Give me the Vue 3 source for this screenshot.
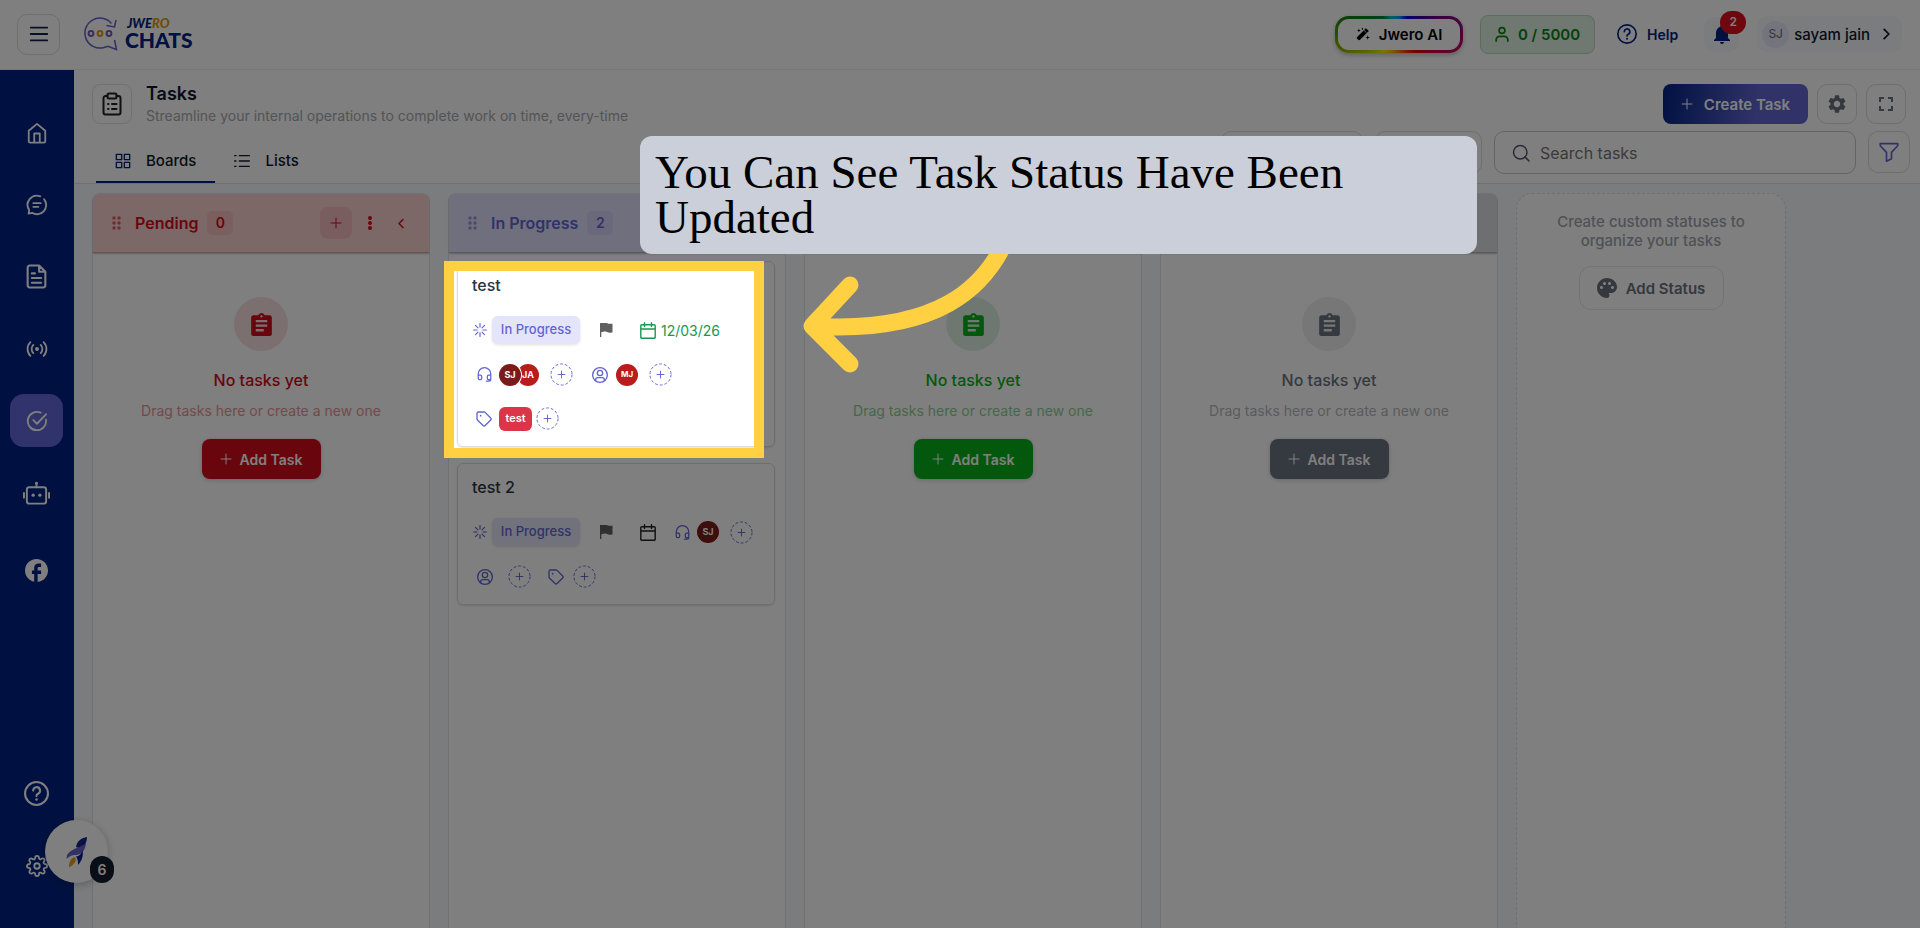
<template>
  <div class="app">
    <svg class="sprite" aria-hidden="true">
      <symbol id="i-menu" viewBox="0 0 24 24"><path d="M3 5h18M3 12h18M3 19h18" class="line" /></symbol>
      <symbol id="i-home" viewBox="0 0 24 24"><path d="M3 9.500 12 2l9 7.500V21a1.500 1.500 0 0 1-1.500 1.500h-15A1.500 1.500 0 0 1 3 21zM9 22v-9.500h6V22" class="line" /></symbol>
      <symbol id="i-chat" viewBox="0 0 24 24"><path d="M15.500 2.600A10 10 0 0 0 3.500 17.500L2.800 21.500l4-.9A10 10 0 0 0 19.800 5.800M8 10h8M8 14h5.500" class="line" /></symbol>
      <symbol id="i-doc" viewBox="0 0 24 24"><path d="M14.500 1.500h-9A2 2 0 0 0 3.500 3.500v17a2 2 0 0 0 2 2h13a2 2 0 0 0 2-2v-13zM14.500 1.500v6h6M7.500 9h3M7.500 13.500h9M7.500 18h9" class="line" /></symbol>
      <symbol id="i-live" viewBox="0 0 24 24"><circle cx="12" cy="12" r="2.200" fill="currentColor" /><path d="M8 7.500a6.400 6.400 0 0 0 0 9M16 7.500a6.400 6.400 0 0 1 0 9M4.800 4.500a10.600 10.600 0 0 0 0 15M19.200 4.500a10.600 10.600 0 0 1 0 15" class="line" /></symbol>
      <symbol id="i-check" viewBox="0 0 24 24"><path d="M21.800 10.500A10 10 0 1 1 16 2.900M8 11l4 4L22 4.500" class="line" /></symbol>
      <symbol id="i-bot" viewBox="0 0 28 24"><rect x="4" y="6" width="20" height="17" rx="2.500" class="line" /><path d="M14 6V1.500M1 12v5M27 12v5" class="line" /><circle cx="14" cy="1.800" r="1.500" fill="currentColor" /><circle cx="10.500" cy="14.300" r="1.700" fill="currentColor" /><circle cx="17.500" cy="14.300" r="1.700" fill="currentColor" /></symbol>
      <symbol id="i-facebook" viewBox="2 2 20 20"><path fill="currentColor" d="M22 12c0-5.520-4.480-10-10-10S2 6.480 2 12c0 4.840 3.440 8.870 8 9.800V15H8v-3h2V9.500C10 7.570 11.570 6 13.500 6H16v3h-2c-.55 0-1 .45-1 1v2h3v3h-3v6.950c5.050-.5 9-4.760 9-9.950" /></symbol>
      <symbol id="i-help" viewBox="0 0 24 24"><circle cx="12" cy="12" r="11" class="line" /><path d="M8.800 9.200a3.300 3.300 0 1 1 4.700 3c-1 .5-1.500 1.100-1.500 2.300" class="line" /><circle cx="12" cy="17.800" r="1.200" fill="currentColor" /></symbol>
      <symbol id="i-cog" viewBox="0 0 24 24"><circle cx="12" cy="12" r="3" class="line" /><path class="line" d="M19.400 15a1.650 1.650 0 0 0 .33 1.820l.06.06a2 2 0 0 1 0 2.830 2 2 0 0 1-2.830 0l-.06-.06a1.650 1.650 0 0 0-1.820-.33 1.650 1.650 0 0 0-1 1.510V21a2 2 0 0 1-2 2 2 2 0 0 1-2-2v-.09A1.650 1.650 0 0 0 9 19.400a1.650 1.650 0 0 0-1.820.33l-.06.06a2 2 0 0 1-2.830 0 2 2 0 0 1 0-2.830l.06-.06a1.650 1.650 0 0 0 .33-1.820 1.650 1.650 0 0 0-1.510-1H3a2 2 0 0 1-2-2 2 2 0 0 1 2-2h.09A1.650 1.650 0 0 0 4.600 9a1.650 1.650 0 0 0-.33-1.820l-.06-.06a2 2 0 0 1 0-2.830 2 2 0 0 1 2.830 0l.06.06a1.650 1.650 0 0 0 1.820.33H9a1.650 1.650 0 0 0 1-1.510V3a2 2 0 0 1 2-2 2 2 0 0 1 2 2v.09a1.650 1.650 0 0 0 1 1.510 1.650 1.650 0 0 0 1.820-.33l.06-.06a2 2 0 0 1 2.830 0 2 2 0 0 1 0 2.830l-.06.06a1.650 1.650 0 0 0-.33 1.820V9a1.650 1.650 0 0 0 1.510 1H21a2 2 0 0 1 2 2 2 2 0 0 1-2 2h-.09a1.650 1.650 0 0 0-1.510 1z" /></symbol>
      <symbol id="i-gear" viewBox="2 2 20 20"><path fill="currentColor" d="M19.140 12.940c.04-.3.06-.61.06-.94 0-.32-.02-.64-.07-.94l2.030-1.580c.18-.14.23-.41.12-.61l-1.920-3.320c-.12-.22-.37-.29-.59-.22l-2.390.96c-.5-.38-1.030-.7-1.620-.94l-.36-2.540c-.04-.24-.24-.41-.48-.41h-3.840c-.24 0-.43.17-.47.41l-.36 2.540c-.59.24-1.130.57-1.620.94l-2.390-.96c-.22-.08-.47 0-.59.22L2.740 8.870c-.12.21-.08.47.12.61l2.030 1.580c-.05.3-.09.63-.09.94s.02.64.07.94l-2.030 1.580c-.18.14-.23.41-.12.61l1.920 3.320c.12.22.37.29.59.22l2.390-.96c.5.38 1.030.7 1.620.94l.36 2.540c.05.24.24.41.48.41h3.840c.24 0 .44-.17.47-.41l.36-2.540c.59-.24 1.130-.56 1.620-.94l2.390.96c.22.08.47 0 .59-.22l1.920-3.320c.12-.22.07-.47-.12-.61zM12 15.600c-1.980 0-3.600-1.620-3.600-3.600s1.620-3.600 3.600-3.600 3.600 1.620 3.600 3.600-1.620 3.600-3.600 3.600" /></symbol>
      <symbol id="i-full" viewBox="5 5 14 14"><path fill="currentColor" d="M7 14H5v5h5v-2H7zm-2-4h2V7h3V5H5zm12 7h-3v2h5v-5h-2zM14 5v2h3v3h2V5z" /></symbol>
      <symbol id="i-clipboard" viewBox="0 0 24 24"><path d="M7.500 4h-2A2 2 0 0 0 3.500 6v14.500a2 2 0 0 0 2 2h13a2 2 0 0 0 2-2V6a2 2 0 0 0-2-2h-2M8 12h.5M8 17h.5M12 12h4.500M12 17h4.500" class="line" /><rect x="7.500" y="1.500" width="9" height="5" rx="1.500" class="line" /></symbol>
      <symbol id="i-boards" viewBox="0 0 24 24"><path d="M2 2h8v8H2zM14 2h8v8h-8zM2 14h8v8H2zM14 14h8v8h-8z" class="line" /></symbol>
      <symbol id="i-lists" viewBox="0 0 24 24"><path d="M8 4h15M8 12h15M8 20h15M1 4h2M1 12h2M1 20h2" class="line" /></symbol>
      <symbol id="i-plus" viewBox="0 0 24 24"><path d="M12 2v20M2 12h20" class="line" /></symbol>
      <symbol id="i-search" viewBox="0 0 24 24"><circle cx="11" cy="11" r="9" class="line" /><path d="m17.500 17.500 5 5" class="line" /></symbol>
      <symbol id="i-filter" viewBox="0 0 24 24"><path d="M1.500 2h21v2.500L15 12.500V20l-6 3V12.500L1.500 4.500z" class="line" /></symbol>
      <symbol id="i-wand" viewBox="0 0 24 24"><path fill="currentColor" d="m17 2 5 5L7 22a2 2 0 0 1-3 0l-2-2a2 2 0 0 1 0-3zM5 3l1 2 2 1-2 1-1 2-1-2-2-1 2-1zM11 1l.7 1.500 1.300.7-1.300.7L11 5.500l-.7-1.600L9 3.200l1.300-.7zM20 14l1 3 3 1-3 1-1 3-1-3-3-1 3-1z" /><path d="m14 6 4 4" stroke="#fff" stroke-width="1.500" /></symbol>
      <symbol id="i-person" viewBox="0 0 24 26"><circle cx="12" cy="7" r="5" class="line" /><path d="M2 25v-2a6 6 0 0 1 6-6h8a6 6 0 0 1 6 6v2" class="line" /></symbol>
      <symbol id="i-bell" viewBox="4 2 16 20"><path fill="currentColor" d="M12 22c1.100 0 2-.9 2-2h-4c0 1.100.89 2 2 2m6-6v-5c0-3.070-1.640-5.640-4.500-6.320V4c0-.83-.67-1.500-1.500-1.500s-1.500.67-1.500 1.500v.68C7.630 5.360 6 7.920 6 11v5l-2 2v1h16v-1z" /></symbol>
      <symbol id="i-right" viewBox="0 0 12 20"><path d="m2 2 8 8-8 8" class="line" /></symbol>
      <symbol id="i-left" viewBox="0 0 12 20"><path d="m10 2-8 8 8 8" class="line" /></symbol>
      <symbol id="i-dots" viewBox="0 0 4 14"><path fill="currentColor" d="M2 0a2 2 0 1 1 0 4 2 2 0 0 1 0-4m0 5a2 2 0 1 1 0 4 2 2 0 0 1 0-4m0 5a2 2 0 1 1 0 4 2 2 0 0 1 0-4" /></symbol>
      <symbol id="i-task" viewBox="3 1 18 20"><path fill="currentColor" d="M19 3h-4.180C14.400 1.840 13.300 1 12 1s-2.400.84-2.820 2H5c-1.100 0-2 .9-2 2v14c0 1.100.9 2 2 2h14c1.100 0 2-.9 2-2V5c0-1.100-.9-2-2-2m-7 0c.55 0 1 .45 1 1s-.45 1-1 1-1-.45-1-1 .45-1 1-1m2 14H7v-2h7zm3-4H7v-2h10zm0-4H7V7h10z" /></symbol>
      <symbol id="i-palette" viewBox="2 2 20 20"><path fill="currentColor" d="M12 2C6.490 2 2 6.490 2 12s4.490 10 10 10c1.380 0 2.500-1.120 2.500-2.500 0-.61-.23-1.200-.64-1.670-.08-.1-.13-.21-.13-.33 0-.28.22-.5.5-.5H16c3.310 0 6-2.690 6-6 0-4.960-4.490-9-10-9m5.500 11c-.83 0-1.500-.67-1.500-1.500s.67-1.500 1.500-1.500 1.500.67 1.500 1.500-.67 1.500-1.500 1.500m-3-4c-.83 0-1.500-.67-1.500-1.500S13.670 6 14.500 6s1.500.67 1.500 1.500S15.330 9 14.500 9M5 11.500c0-.83.67-1.500 1.500-1.500s1.500.67 1.500 1.500S7.330 13 6.500 13 5 12.330 5 11.500m6-4c0 .83-.67 1.500-1.500 1.500S8 8.330 8 7.500 8.670 6 9.500 6s1.500.67 1.500 1.500" /></symbol>
      <symbol id="i-loader" viewBox="0 0 24 24"><path d="M12 1v6M12 17v6M1 12h6M17 12h6M4.200 4.200l4.300 4.300M15.500 15.500l4.300 4.300M4.200 19.800l4.300-4.300M15.500 8.500l4.300-4.300" class="line" /></symbol>
      <symbol id="i-flag" viewBox="0 0 13 14"><path fill="currentColor" d="M0 0h6.500c1 0 1.300.8 2.300.8H12.500v8.400c-2 .8-4 .6-5.500-.2-1.500-.8-3.500-.6-5.700.2V14H0z" /></symbol>
      <symbol id="i-calendar" viewBox="0 0 16 17"><path d="M1.800 2.700h12.400a1 1 0 0 1 1 1v11.500a1 1 0 0 1-1 1H1.800a1 1 0 0 1-1-1V3.700a1 1 0 0 1 1-1zM.8 7h14.400M4.500.8v3.700M11.500.8v3.700" class="line" /></symbol>
      <symbol id="i-headset" viewBox="0 0 24 24"><path d="M2 13v-2a10 10 0 0 1 20 0v8.500a3 3 0 0 1-3 3h-4M2 13h3.500a2 2 0 0 1 2 2v3a2 2 0 0 1-2 2H4a2 2 0 0 1-2-2zM22 13h-3.500a2 2 0 0 0-2 2v3a2 2 0 0 0 2 2H22" class="line" /></symbol>
      <symbol id="i-user" viewBox="0 0 24 24"><circle cx="12" cy="12" r="11" class="line" /><circle cx="12" cy="9" r="4" class="line" /><path d="M5.500 20.500v-1.500a3 3 0 0 1 3-3h7a3 3 0 0 1 3 3v1.500" class="line" /></symbol>
      <symbol id="i-tag" viewBox="0 0 24 24"><path d="M1.500 3.500a2 2 0 0 1 2-2h8.800a2 2 0 0 1 1.400.6l8.300 8.300a2.200 2.200 0 0 1 0 3.100l-8.300 8.300a2.200 2.200 0 0 1-3.100 0l-8.500-8.400a2 2 0 0 1-.6-1.400z" class="line" /><circle cx="7" cy="7" r="1.300" fill="currentColor" /></symbol>
    </svg>

    <header class="topbar">
      <button class="menu-btn" aria-label="Menu"><svg class="s22"><use href="#i-menu" /></svg></button>
      <a href="#" class="logo">
        <svg class="logo-mark" viewBox="0 0 34 34">
          <path d="M27.500 6.500A15 15 0 1 0 20 30.500l4-1.200 8.500 3.200-2-9.500M22.500 8.500l8 1.500L32 3" fill="none" stroke="#6460c8" stroke-width="1.500" />
          <g fill="none" stroke-width="2">
            <circle cx="7" cy="16.500" r="2.400" stroke="#7a58b8" />
            <circle cx="16" cy="16.500" r="2.400" stroke="#e0980c" />
            <circle cx="25" cy="16.500" r="2.400" stroke="#7a58b8" />
          </g>
        </svg>
        <span class="logo-text">
          <span class="logo-small">JWE<em>RO</em></span>
          <span class="logo-big">CHATS</span>
        </span>
      </a>
      <div class="top-right">
        <button class="ai-btn"><svg class="s14"><use href="#i-wand" /></svg>Jwero AI</button>
        <div class="credits"><svg class="credit-icon"><use href="#i-person" /></svg>0 / 5000</div>
        <a href="#" class="help-link"><svg class="s20"><use href="#i-help" /></svg>Help</a>
        <button class="bell" aria-label="Notifications">
          <svg class="bell-icon"><use href="#i-bell" /></svg>
          <span class="bell-count">2</span>
        </button>
        <button class="account">
          <span class="account-avatar">SJ</span>sayam jain<svg class="account-arrow"><use href="#i-right" /></svg>
        </button>
      </div>
    </header>

    <div class="body">
      <nav class="sidebar">
        <a
          v-for="item in navItems"
          :key="item.icon"
          href="#"
          class="nav-item"
          :class="['nav-' + item.icon, { active: item.active }]"
          :aria-label="item.label"
        >
          <svg><use :href="'#i-' + item.icon" /></svg>
        </a>
      </nav>

      <main class="main">
        <section class="page-head">
          <div class="head-left">
            <div class="title-row">
              <span class="title-icon"><svg class="s24"><use href="#i-clipboard" /></svg></span>
              <div>
                <h1>Tasks</h1>
                <p>Streamline your internal operations to complete work on time, every-time</p>
              </div>
            </div>
            <div class="tabs">
              <button class="tab selected"><svg class="s16"><use href="#i-boards" /></svg>Boards</button>
              <button class="tab"><svg class="s16"><use href="#i-lists" /></svg>Lists</button>
            </div>
          </div>
          <div class="head-right">
            <div class="actions">
              <button class="create-btn"><svg class="s12"><use href="#i-plus" /></svg>Create Task</button>
              <button class="icon-btn" aria-label="Settings"><svg class="s18"><use href="#i-gear" /></svg></button>
              <button class="icon-btn" aria-label="Fullscreen"><svg class="s14"><use href="#i-full" /></svg></button>
            </div>
            <div class="filters">
              <button class="filter-box wide" aria-label="Sort"></button>
              <button class="filter-box" aria-label="Group"></button>
              <label class="search">
                <svg class="s18"><use href="#i-search" /></svg>
                <input type="text" placeholder="Search tasks" aria-label="Search tasks" />
              </label>
              <button class="icon-btn funnel" aria-label="Filter"><svg class="s20"><use href="#i-filter" /></svg></button>
            </div>
          </div>
        </section>

        <section class="board">
          <div v-for="col in columns" :key="col.key" class="column" :class="col.key">
            <div class="column-head">
              <template v-if="col.title">
                <svg class="grip" viewBox="0 0 9 14">
                  <g fill="currentColor">
                    <circle v-for="n in 6" :key="n" :cx="n % 2 ? 2 : 7" :cy="Math.ceil(n / 2) * 5 - 3" r="1.700" />
                  </g>
                </svg>
                <h2>{{ col.title }}</h2>
                <span class="count">{{ col.tasks.length }}</span>
              </template>
              <button class="col-add" aria-label="Add"><svg class="s12"><use href="#i-plus" /></svg></button>
              <button class="col-more" aria-label="More"><svg class="dots"><use href="#i-dots" /></svg></button>
              <button class="col-fold" aria-label="Collapse"><svg class="fold"><use href="#i-left" /></svg></button>
            </div>

            <div v-if="!col.tasks.length" class="empty">
              <span class="empty-icon"><svg><use href="#i-task" /></svg></span>
              <h3>No tasks yet</h3>
              <p>Drag tasks here or create a new one</p>
              <button class="add-task"><svg class="s12"><use href="#i-plus" /></svg>Add Task</button>
            </div>

            <div v-else class="cards">
              <article v-for="task in col.tasks" :key="task.name" class="card">
                <h3>{{ task.name }}</h3>
                <div class="meta">
                  <svg class="s14 loader"><use href="#i-loader" /></svg>
                  <span class="status">In Progress</span>
                  <svg class="flag"><use href="#i-flag" /></svg>
                  <span class="date" :class="{ set: task.date }">
                    <svg><use href="#i-calendar" /></svg>{{ task.date }}
                  </span>
                  <div v-for="group in task.groups" :key="group.icon" class="group" :class="group.icon">
                    <svg class="group-icon"><use :href="'#i-' + group.icon" /></svg>
                    <span v-if="group.people.length" class="people">
                      <span v-for="p in group.people" :key="p" class="avatar" :class="p">{{ p }}</span>
                    </span>
                    <span v-if="group.tag" class="tag-chip">{{ group.tag }}</span>
                    <button class="ring" aria-label="Add">
                      <svg viewBox="0 0 24 24">
                        <circle cx="12" cy="12" r="11" fill="none" stroke="currentColor" stroke-dasharray="3 2" />
                        <path d="M12 8v8M8 12h8" stroke="currentColor" />
                      </svg>
                    </button>
                  </div>
                </div>
              </article>
            </div>
          </div>

          <div class="new-status">
            <p>Create custom statuses to organize your tasks</p>
            <button><svg class="s20"><use href="#i-palette" /></svg>Add Status</button>
          </div>
        </section>
      </main>
    </div>

    <button class="launcher" aria-label="Launcher">
      <svg viewBox="0 0 22 32">
        <path d="M21 1C15 2 11 5 10 11l5 2c4-3 6-7 6-12z" fill="#14248c" />
        <path d="M20 7C15 12 5 12 1 19l-.5 4c4-4 7-4 10-4 6-1 9-6 9.500-12z" fill="#6663c8" />
        <path d="M16.500 14c1 5 0 10-4.500 15 0-3 0-6-2-8.500 3-.5 5-2 6.500-6.500z" fill="#0c1c98" />
        <path d="M9 21c2 3 0 7-6 10.500 0-5 1-9 6-10.500z" fill="#e0a020" />
      </svg>
      <span>6</span>
    </button>

    <div class="spotlight"></div>
    <svg class="arrow" viewBox="0 0 220 140">
      <path d="M203 0C182 46 137 94 9 86M47 45 9 86l38 38" fill="none" stroke="#ffd142" stroke-width="17" stroke-linecap="round" stroke-linejoin="round" />
    </svg>
    <div class="callout">You Can See Task Status Have Been Updated</div>
  </div>
</template>

<script setup>
const navItems = [
  { icon: 'home', label: 'Home' },
  { icon: 'chat', label: 'Chats' },
  { icon: 'doc', label: 'Templates' },
  { icon: 'live', label: 'Broadcast' },
  { icon: 'check', label: 'Tasks', active: true },
  { icon: 'bot', label: 'Bots' },
  { icon: 'facebook', label: 'Facebook' },
  { icon: 'help', label: 'Help' },
  { icon: 'cog', label: 'Settings' }
];

const columns = [
  { key: 'pending', title: 'Pending', tasks: [] },
  {
    key: 'progress',
    title: 'In Progress',
    tasks: [
      {
        name: 'test',
        date: '12/03/26',
        groups: [
          { icon: 'headset', people: ['SJ', 'JA'] },
          { icon: 'user', people: ['MJ'] },
          { icon: 'tag', people: [], tag: 'test' }
        ]
      },
      {
        name: 'test 2',
        date: '',
        groups: [
          { icon: 'headset', people: ['SJ'] },
          { icon: 'user', people: [] },
          { icon: 'tag', people: [] }
        ]
      }
    ]
  },
  { key: 'done', title: '', tasks: [] },
  { key: 'closed', title: '', tasks: [] }
];
</script>

<style>
body {
  margin: 0;
}
</style>

<style scoped>
.app {
  position: relative;
  display: flex;
  flex-direction: column;
  height: 100vh;
  overflow: hidden;
  background: #fff;
  color: #0c1530;
  font-family: Inter, "Liberation Sans", sans-serif;
  font-size: 16px;
}

.app * {
  box-sizing: border-box;
}

button {
  display: flex;
  align-items: center;
  justify-content: center;
  padding: 0;
  border: none;
  background: none;
  color: inherit;
  font: inherit;
}

a {
  color: inherit;
  text-decoration: none;
}

h1,
h2,
h3,
p {
  margin: 0;
}

svg {
  flex: none;
  stroke-width: 2px;
}

.sprite {
  position: absolute;
  width: 0;
  height: 0;
}

.line {
  fill: none;
  stroke: currentColor;
  stroke-width: inherit;
  stroke-linecap: round;
  stroke-linejoin: round;
}

.s12 { width: 12px; height: 12px; }
.s14 { width: 14px; height: 14px; }
.s16 { width: 16px; height: 16px; }
.s18 { width: 18px; height: 18px; }
.s20 { width: 20px; height: 20px; }
.s22 { width: 22px; height: 22px; }
.s24 { width: 24px; height: 26px; }

/* top bar */
.topbar {
  display: flex;
  align-items: center;
  height: 70px;
  flex: none;
  padding: 0 18px 1px 17px;
  border-bottom: 1px solid #ededf0;
}

.menu-btn {
  width: 43px;
  height: 41px;
  border: 1px solid #dcdce0;
  border-radius: 10px;
  color: #0c2050;
}

.logo {
  display: flex;
  align-items: center;
  gap: 7px;
  margin-left: 24px;
}

.logo-mark {
  width: 34px;
  height: 34px;
}

.logo-text {
  display: flex;
  flex-direction: column;
  font-family: Lato, sans-serif;
  font-weight: 900;
  color: #002282;
}

.logo-small {
  margin-left: 2px;
  font-size: 13px;
  font-style: italic;
  line-height: 12px;
}

.logo-small em {
  color: #e0980c;
}

.logo-big {
  font-size: 21px;
  line-height: 22px;
}

.top-right {
  display: flex;
  align-items: center;
  margin-left: auto;
}

.ai-btn {
  gap: 9px;
  width: 128px;
  height: 37px;
  border: 3px solid transparent;
  border-radius: 14px;
  background:
    linear-gradient(#fff, #fff) padding-box,
    conic-gradient(#00a0f0, #0000f0 7%, #400090 15%, #900080 21%, #c00060 29%, #f00000 38%, #f08000 50%, #f0f000 62%, #90b000 71%, #108000 80%, #008040 88%, #00c0c0 93%, #00a0f0) border-box;
  box-shadow: 0 2px 5px rgba(0, 0, 0, 0.25);
  color: #000;
  font-size: 15px;
  font-weight: 600;
}

.credits {
  display: flex;
  align-items: center;
  justify-content: center;
  gap: 9px;
  width: 115px;
  height: 39px;
  margin-left: 17px;
  border: 1px solid #b4dcb8;
  border-radius: 8px;
  background: #e0f2e2;
  color: #0a8212;
  font-size: 15px;
  font-weight: 600;
}

.credit-icon {
  width: 14px;
  height: 16px;
  stroke-width: 3px;
}

.help-link {
  display: flex;
  align-items: center;
  gap: 10px;
  margin-left: 22px;
  color: #002282;
  font-size: 14px;
  font-weight: 600;
}

.bell {
  position: relative;
  width: 35px;
  height: 35px;
  margin-left: 26px;
  border-radius: 10px;
  background: #f6f9fa;
  color: #002282;
}

.bell-icon {
  width: 16px;
  height: 20px;
}

.bell-count {
  position: absolute;
  top: -6px;
  right: -7px;
  width: 26px;
  height: 23px;
  border-radius: 12px;
  background: #d8101c;
  color: #fff;
  font-size: 12px;
  font-weight: 600;
  line-height: 22px;
}

.account {
  gap: 5px;
  height: 36px;
  margin-left: 18px;
  padding: 0 12px 0 5px;
  border-radius: 10px;
  background: #f6f9fa;
  font-size: 15px;
  font-weight: 500;
}

.account-avatar {
  width: 27px;
  height: 27px;
  border-radius: 50%;
  background: #e6e8fa;
  color: #606a80;
  font-size: 12px;
  font-weight: 400;
  line-height: 26px;
}

.account-arrow {
  width: 7px;
  height: 12px;
  margin-left: 8px;
  stroke-width: 3px;
}

.body {
  display: flex;
  flex: 1;
  min-height: 0;
}

/* sidebar */
.sidebar {
  display: flex;
  flex-direction: column;
  align-items: center;
  gap: 19px;
  width: 74px;
  flex: none;
  padding: 36px 1px 36px 0;
  background: #002282;
  color: #fff;
}

.nav-item {
  display: flex;
  align-items: center;
  justify-content: center;
  width: 53px;
  height: 53px;
  border-radius: 14px;
}

.nav-item svg {
  width: 22px;
  height: 22px;
}

.nav-item.active {
  background: #6268d8;
}

.nav-item.nav-bot svg {
  width: 27px;
  height: 24px;
}

.nav-item.nav-doc svg,
.nav-item.nav-help svg {
  width: 25px;
  height: 25px;
}

.nav-facebook {
  margin-top: 6px;
}

.nav-item.nav-facebook svg {
  width: 23px;
  height: 23px;
}

.nav-help {
  margin-top: auto;
}

/* page head */
.main {
  display: flex;
  flex-direction: column;
  flex: 1;
  min-width: 0;
}

.page-head {
  display: flex;
  justify-content: space-between;
  height: 114px;
  flex: none;
  padding: 14px 10px 0 18px;
  border-bottom: 1px solid #dde0e4;
}

.head-left {
  display: flex;
  flex-direction: column;
  justify-content: space-between;
}

.title-row {
  display: flex;
  gap: 14px;
}

.title-icon {
  display: flex;
  align-items: center;
  justify-content: center;
  width: 40px;
  height: 40px;
  border: 1px solid #e0e0e4;
  border-radius: 8px;
  color: #202020;
}

h1 {
  font-size: 18px;
  font-weight: 600;
  line-height: 20px;
}

.title-row p {
  color: #a6a8ae;
  font-size: 14px;
  line-height: 24px;
}

.tabs {
  display: flex;
  padding-left: 4px;
}

.tab {
  gap: 15px;
  height: 46px;
  padding: 3px 19px 0;
  border-bottom: 2px solid transparent;
  color: #101828;
  font-size: 15px;
  font-weight: 500;
}

.tab.selected {
  border-color: #002282;
}

.tab.selected svg {
  color: #002282;
}

.head-right {
  display: flex;
  flex-direction: column;
  align-items: flex-end;
  gap: 7px;
}

.actions {
  display: flex;
  gap: 9px;
  padding-right: 4px;
}

.create-btn {
  gap: 11px;
  width: 145px;
  height: 40px;
  border-radius: 8px;
  background: linear-gradient(100deg, #002282, #6366d1 65%);
  color: #fff;
  font-size: 15px;
  font-weight: 600;
}

.icon-btn {
  width: 40px;
  height: 40px;
  border: 1px solid #dcdce0;
  border-radius: 10px;
  color: #6a707c;
}

.filters {
  display: flex;
  gap: 12px;
}

.filter-box {
  width: 107px;
  height: 43px;
  border: 1px solid #dcdce0;
  border-radius: 10px;
}

.filter-box.wide {
  width: 142px;
}

.search {
  display: flex;
  align-items: center;
  gap: 10px;
  width: 362px;
  height: 43px;
  padding: 0 17px;
  border: 1px solid #c8c8cc;
  border-radius: 10px;
  color: #555570;
}

.search input {
  flex: 1;
  min-width: 0;
  padding: 0;
  border: none;
  outline: none;
  background: none;
  font: inherit;
}

.search input::placeholder {
  color: #757575;
}

.funnel {
  width: 42px;
  height: 42px;
  color: #6366d1;
}

/* board */
.board {
  display: flex;
  gap: 18px;
  flex: 1;
  min-height: 0;
  padding: 9px 18px 0;
  background: #f6f9fd;
}

.column {
  --tone: #6b7280;
  --head: #dcdee0;
  --soft: #eeeeef;
  --muted: #b4b7bc;
  width: 338px;
  flex: none;
  border: 1px solid #e2e4e8;
  border-bottom: none;
  border-radius: 8px 8px 0 0;
  background: #fff;
  color: var(--tone);
}

.column.pending {
  --tone: #d20a18;
  --head: #fad0d0;
  --soft: #f9dfe0;
  --muted: #e49498;
}

.column.progress {
  --tone: #6065d0;
  --head: #e0dffa;
}

.column.done {
  --tone: #08b01c;
  --head: #d8f4dc;
  --soft: #dff0e1;
  --muted: #8cce92;
}

.column-head {
  display: flex;
  align-items: center;
  height: 59px;
  padding: 0 15px 0 19px;
  border-bottom: 1px solid rgba(0, 0, 0, 0.2);
  border-radius: 7px 7px 0 0;
  background: var(--head);
  box-shadow: 0 1px 2px rgba(0, 0, 0, 0.25);
}

.grip {
  width: 9px;
  height: 14px;
  margin-right: 14px;
  opacity: 0.6;
}

h2 {
  font-size: 16px;
  font-weight: 600;
}

.count {
  width: 26px;
  height: 24px;
  margin-left: 9px;
  border-radius: 5px;
  background: color-mix(in srgb, var(--tone) 9%, transparent);
  font-size: 14px;
  font-weight: 600;
  line-height: 24px;
  text-align: center;
}

.col-add {
  width: 32px;
  height: 32px;
  margin-left: auto;
  border-radius: 8px;
  background: color-mix(in srgb, var(--tone) 10%, transparent);
}

.col-more {
  width: 36px;
}

.dots {
  width: 4px;
  height: 14px;
}

.col-fold {
  width: 26px;
}

.fold {
  width: 6px;
  height: 11px;
  stroke-width: 3px;
}

.empty {
  display: flex;
  flex-direction: column;
  align-items: center;
  padding-top: 44px;
}

.empty-icon {
  display: flex;
  align-items: center;
  justify-content: center;
  width: 54px;
  height: 54px;
  margin-bottom: 17px;
  border-radius: 50%;
  background: var(--soft);
}

.empty-icon svg {
  width: 21px;
  height: 23px;
}

.empty h3 {
  margin-bottom: 9px;
  font-size: 16px;
  font-weight: 500;
  line-height: 24px;
}

.empty p {
  margin-bottom: 18px;
  color: var(--muted);
  font-size: 14px;
  line-height: 20px;
}

.add-task {
  gap: 8px;
  width: 119px;
  height: 40px;
  border-radius: 8px;
  background: var(--tone);
  box-shadow: 0 1px 4px rgba(0, 0, 0, 0.2);
  color: #fff;
  font-size: 14px;
  font-weight: 600;
}

.cards {
  display: flex;
  flex-direction: column;
  gap: 16px;
  padding: 8px 10px 8px 8px;
}

.card {
  padding: 13px 0 14px 14px;
  border: 1px solid #dcdce0;
  border-radius: 6px;
  box-shadow: 0 1px 2px rgba(0, 0, 0, 0.12);
}

.card h3 {
  margin-bottom: 21px;
  color: #2c3444;
  font-size: 16px;
  font-weight: 500;
  line-height: 20px;
}

.meta {
  display: flex;
  flex-wrap: wrap;
  align-items: center;
  row-gap: 17px;
}

.loader {
  margin-left: 1px;
}

.status {
  width: 88px;
  height: 28px;
  margin-left: 5px;
  border-radius: 6px;
  background: #e4e5fa;
  box-shadow: 0 1px 3px rgba(0, 0, 0, 0.12);
  color: #6366d1;
  font-size: 13px;
  font-weight: 500;
  line-height: 27px;
  text-align: center;
}

.flag {
  width: 13px;
  height: 14px;
  margin-left: 20px;
  color: #606060;
}

.date {
  display: flex;
  align-items: center;
  gap: 5px;
  margin-left: 27px;
  color: #202020;
  font-size: 14px;
}

.date svg {
  width: 16px;
  height: 17px;
  stroke-width: 1.4px;
}

.date.set {
  width: 96px;
  color: #149a50;
}

.group {
  display: flex;
  align-items: center;
  height: 27px;
  margin-right: 19px;
}

.group-icon {
  width: 16px;
  height: 16px;
  margin-left: 4px;
  margin-right: 7px;
}

.headset .group-icon {
  width: 15px;
  height: 15px;
  margin-left: 5px;
}

.date:not(.set) + .headset {
  margin-left: 14px;
  margin-right: 0;
}

.user .group-icon {
  margin-left: 0;
  margin-right: 8px;
}

.date:not(.set) ~ .user .group-icon {
  margin-left: 5px;
  margin-right: 15px;
}

.date:not(.set) ~ .tag {
  margin-left: -2px;
}

.date:not(.set) ~ .tag .group-icon {
  margin-left: 0;
  margin-right: 9px;
}

.people {
  display: flex;
  margin-right: 11px;
}

.avatar {
  z-index: 1;
  width: 22px;
  height: 22px;
  border-radius: 50%;
  background: #b81c1c;
  color: #fff;
  font-size: 9px;
  font-weight: 700;
  line-height: 22px;
  text-align: center;
}

.avatar.SJ {
  z-index: 2;
  background: #7c1a1a;
  box-shadow: 0 0 0 1px #fff;
}

.date:not(.set) + .headset .avatar {
  box-shadow: none;
}

.avatar.JA {
  margin-left: -4px;
}

.avatar.MJ {
  font-size: 8px;
  line-height: 20px;
}

.tag-chip {
  width: 33px;
  height: 24px;
  margin-right: 4px;
  border-radius: 6px;
  background: #dc3548;
  color: #fff;
  font-size: 11px;
  font-weight: 600;
  line-height: 23px;
  text-align: center;
}

.ring,
.ring svg {
  width: 23px;
  height: 23px;
  stroke-width: 1px;
}

.new-status {
  display: flex;
  flex-direction: column;
  align-items: center;
  width: 270px;
  flex: none;
  padding: 18px 30px 0;
  border: 1px dashed #dcdee2;
  border-bottom: none;
  border-radius: 16px 16px 0 0;
  background: #fff;
}

.new-status p {
  margin-bottom: 16px;
  color: #a0a3ad;
  font-size: 15px;
  font-weight: 500;
  line-height: 19px;
  text-align: center;
}

.new-status button {
  gap: 9px;
  width: 145px;
  height: 44px;
  border: 1px solid #e6e6ea;
  border-radius: 12px;
  color: #6a707c;
  font-size: 15px;
  font-weight: 600;
}

.launcher {
  position: absolute;
  left: 45px;
  bottom: 45px;
  width: 63px;
  height: 63px;
  border-radius: 50%;
  background: #fff;
  box-shadow: 0 2px 8px rgba(0, 0, 0, 0.25);
}

.launcher svg {
  width: 22px;
  height: 32px;
}

.launcher span {
  position: absolute;
  right: -6px;
  bottom: 0;
  width: 24px;
  height: 27px;
  border-radius: 12px;
  background: #141c2c;
  color: #fff;
  font-size: 14px;
  font-weight: 600;
  line-height: 27px;
}

/* walkthrough layer: dims everything outside the spotlight */
.spotlight {
  position: absolute;
  top: 261px;
  left: 444px;
  z-index: 10;
  width: 320px;
  height: 197px;
  border: 10px solid #ffd142;
  box-shadow: 0 0 0 3000px rgba(0, 0, 0, 0.5);
}

.arrow {
  position: absolute;
  top: 240px;
  left: 803px;
  z-index: 11;
  width: 220px;
  height: 140px;
}

.callout {
  position: absolute;
  top: 136px;
  left: 640px;
  z-index: 12;
  width: 837px;
  padding: 14px 15px;
  border-radius: 12px;
  background: #cbcfd9;
  color: #000;
  font-family: "Liberation Serif", serif;
  font-size: 47px;
  line-height: 45px;
}
</style>
